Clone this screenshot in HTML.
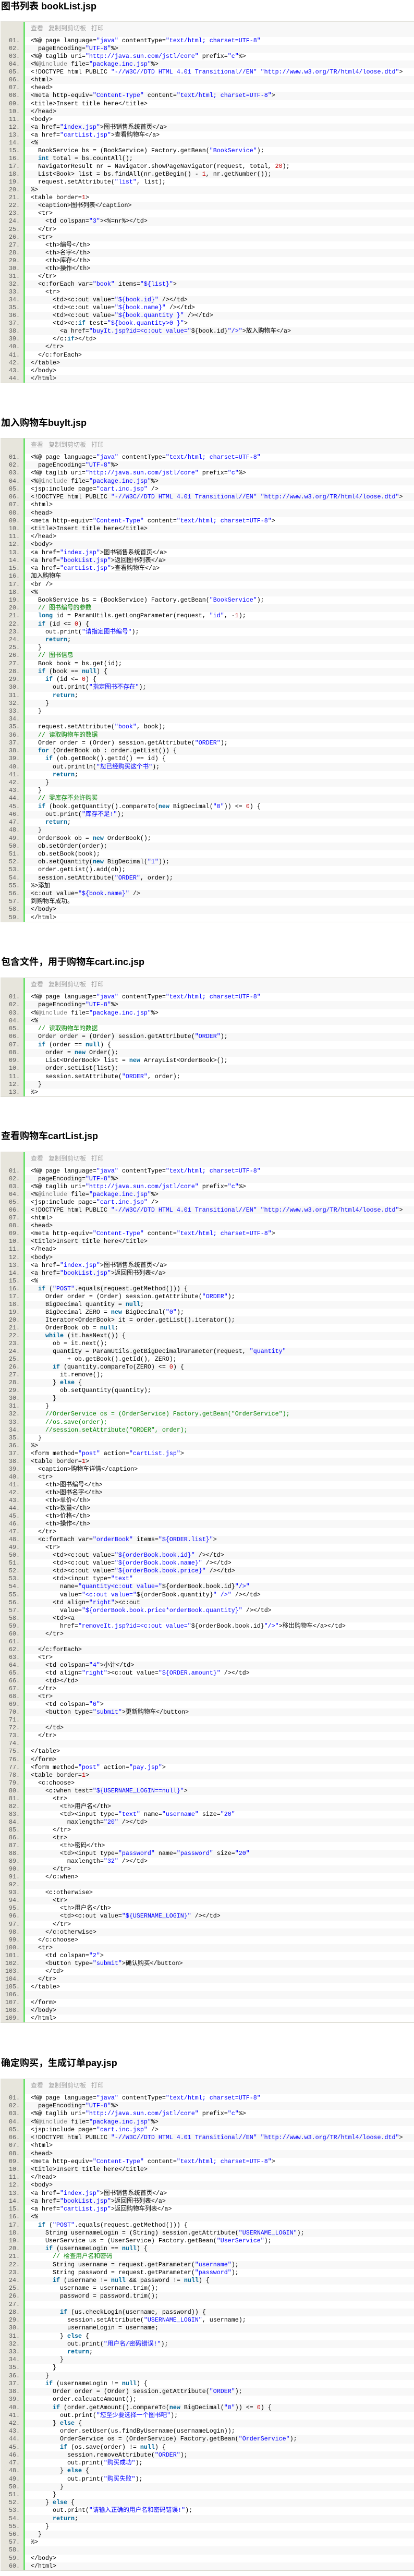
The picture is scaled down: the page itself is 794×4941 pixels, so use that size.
<!DOCTYPE html>
<html><head><meta charset="utf-8"><title>jsp</title>
<style>
body{margin:0;width:794px;height:4941px;position:relative;background:#fff;font-family:"Liberation Sans","Noto Sans CJK SC",sans-serif;overflow:hidden}
h2{position:absolute;left:2px;margin:0;font-size:18px;line-height:24px;font-weight:bold;color:#000;white-space:nowrap}
.b{position:absolute;left:1px;width:793px;background:#e7e5dc;border-top:1px solid #dcdbd2;border-bottom:1px solid #dcdbd2;font-family:"Liberation Mono","Noto Sans CJK SC",monospace;font-size:11.66px;counter-reset:n}
.b::before{content:"";position:absolute;left:44px;top:0;bottom:0;width:3px;background:#6ce26c}
.t{height:29px;margin-left:47px;background:#f8f8f8;color:#a0a0a0;padding-left:11px;font:12px/24px "Liberation Sans","Noto Sans CJK SC",sans-serif;white-space:nowrap}
.t span{margin-right:10px}
.l{height:var(--h);line-height:var(--h);white-space:pre;padding-left:58px;position:relative;background:linear-gradient(90deg,transparent 47px,#fff 47px);counter-increment:n;color:#000;overflow:hidden}
.l:nth-child(odd){background:linear-gradient(90deg,transparent 47px,#f8f8f8 47px)}
.l::before{content:counter(n,decimal-leading-zero)".";position:absolute;left:0;width:37px;text-align:right;color:#5c5c5c}
s{text-decoration:none;color:#0000ff}
k{font-weight:bold;color:#006699}
c{color:#008200}
n{color:#c00000}
g{color:#808080}
</style></head><body>

<h2 style="top:0">图书列表 bookList.jsp</h2>
<div class="b" style="top:41px;--h:15.07px">
<div class="t"><span>查看</span><span>复制到剪切板</span><span>打印</span></div>
<div class="l">&lt;%@ page language=<s>"java"</s> contentType=<s>"text/html; charset=UTF-8"</s></div>
<div class="l">  pageEncoding=<s>"UTF-8"</s>%&gt;</div>
<div class="l">&lt;%@ taglib uri=<s>"http://java.sun.com/jstl/core"</s> prefix=<s>"c"</s>%&gt;</div>
<div class="l">&lt;%<g>@include</g> file=<s>"package.inc.jsp"</s>%&gt;</div>
<div class="l">&lt;!DOCTYPE html PUBLIC <s>"-//W3C//DTD HTML 4.01 Transitional//EN"</s> <s>"http://www.w3.org/TR/html4/loose.dtd"</s>&gt;</div>
<div class="l">&lt;html&gt;</div>
<div class="l">&lt;head&gt;</div>
<div class="l">&lt;meta http-equiv=<s>"Content-Type"</s> content=<s>"text/html; charset=UTF-8"</s>&gt;</div>
<div class="l">&lt;title&gt;Insert title here&lt;/title&gt;</div>
<div class="l">&lt;/head&gt;</div>
<div class="l">&lt;body&gt;</div>
<div class="l">&lt;a href=<s>"index.jsp"</s>&gt;图书销售系统首页&lt;/a&gt;</div>
<div class="l">&lt;a href=<s>"cartList.jsp"</s>&gt;查看购物车&lt;/a&gt;</div>
<div class="l">&lt;%</div>
<div class="l">  BookService bs = (BookService) Factory.getBean(<s>"BookService"</s>);</div>
<div class="l">  <k>int</k> total = bs.countAll();</div>
<div class="l">  NavigatorResult nr = Navigator.showPageNavigator(request, total, <n>20</n>);</div>
<div class="l">  List&lt;Book&gt; list = bs.findAll(nr.getBegin() - <n>1</n>, nr.getNumber());</div>
<div class="l">  request.setAttribute(<s>"list"</s>, list);</div>
<div class="l">%&gt;</div>
<div class="l">&lt;table border=<n>1</n>&gt;</div>
<div class="l">  &lt;caption&gt;图书列表&lt;/caption&gt;</div>
<div class="l">  &lt;tr&gt;</div>
<div class="l">    &lt;td colspan=<s>"3"</s>&gt;&lt;%=nr%&gt;&lt;/td&gt;</div>
<div class="l">  &lt;/tr&gt;</div>
<div class="l">  &lt;tr&gt;</div>
<div class="l">    &lt;th&gt;编号&lt;/th&gt;</div>
<div class="l">    &lt;th&gt;名字&lt;/th&gt;</div>
<div class="l">    &lt;th&gt;库存&lt;/th&gt;</div>
<div class="l">    &lt;th&gt;操作&lt;/th&gt;</div>
<div class="l">  &lt;/tr&gt;</div>
<div class="l">  &lt;c:forEach var=<s>"book"</s> items=<s>"${list}"</s>&gt;</div>
<div class="l">    &lt;tr&gt;</div>
<div class="l">      &lt;td&gt;&lt;c:out value=<s>"${book.id}"</s> /&gt;&lt;/td&gt;</div>
<div class="l">      &lt;td&gt;&lt;c:out value=<s>"${book.name}"</s> /&gt;&lt;/td&gt;</div>
<div class="l">      &lt;td&gt;&lt;c:out value=<s>"${book.quantity }"</s> /&gt;&lt;/td&gt;</div>
<div class="l">      &lt;td&gt;&lt;c:<k>if</k> test=<s>"${book.quantity&gt;0 }"</s>&gt;</div>
<div class="l">        &lt;a href=<s>"buyIt.jsp?id=&lt;c:out value="</s>${book.id}<s>"/&gt;"</s>&gt;放入购物车&lt;/a&gt;</div>
<div class="l">      &lt;/c:<k>if</k>&gt;&lt;/td&gt;</div>
<div class="l">    &lt;/tr&gt;</div>
<div class="l">  &lt;/c:forEach&gt;</div>
<div class="l">&lt;/table&gt;</div>
<div class="l">&lt;/body&gt;</div>
<div class="l">&lt;/html&gt;</div>
</div>

<h2 style="top:799px">加入购物车buyIt.jsp</h2>
<div class="b" style="top:840px;--h:15.22px">
<div class="t"><span>查看</span><span>复制到剪切板</span><span>打印</span></div>
<div class="l">&lt;%@ page language=<s>"java"</s> contentType=<s>"text/html; charset=UTF-8"</s></div>
<div class="l">  pageEncoding=<s>"UTF-8"</s>%&gt;</div>
<div class="l">&lt;%@ taglib uri=<s>"http://java.sun.com/jstl/core"</s> prefix=<s>"c"</s>%&gt;</div>
<div class="l">&lt;%<g>@include</g> file=<s>"package.inc.jsp"</s>%&gt;</div>
<div class="l">&lt;jsp:include page=<s>"cart.inc.jsp"</s> /&gt;</div>
<div class="l">&lt;!DOCTYPE html PUBLIC <s>"-//W3C//DTD HTML 4.01 Transitional//EN"</s> <s>"http://www.w3.org/TR/html4/loose.dtd"</s>&gt;</div>
<div class="l">&lt;html&gt;</div>
<div class="l">&lt;head&gt;</div>
<div class="l">&lt;meta http-equiv=<s>"Content-Type"</s> content=<s>"text/html; charset=UTF-8"</s>&gt;</div>
<div class="l">&lt;title&gt;Insert title here&lt;/title&gt;</div>
<div class="l">&lt;/head&gt;</div>
<div class="l">&lt;body&gt;</div>
<div class="l">&lt;a href=<s>"index.jsp"</s>&gt;图书销售系统首页&lt;/a&gt;</div>
<div class="l">&lt;a href=<s>"bookList.jsp"</s>&gt;返回图书列表&lt;/a&gt;</div>
<div class="l">&lt;a href=<s>"cartList.jsp"</s>&gt;查看购物车&lt;/a&gt;</div>
<div class="l">加入购物车</div>
<div class="l">&lt;br /&gt;</div>
<div class="l">&lt;%</div>
<div class="l">  BookService bs = (BookService) Factory.getBean(<s>"BookService"</s>);</div>
<div class="l">  <c>// 图书编号的参数</c></div>
<div class="l">  <k>long</k> id = ParamUtils.getLongParameter(request, <s>"id"</s>, -<n>1</n>);</div>
<div class="l">  <k>if</k> (id &lt;= <n>0</n>) {</div>
<div class="l">    out.print(<s>"请指定图书编号"</s>);</div>
<div class="l">    <k>return</k>;</div>
<div class="l">  }</div>
<div class="l">  <c>// 图书信息</c></div>
<div class="l">  Book book = bs.get(id);</div>
<div class="l">  <k>if</k> (book == <k>null</k>) {</div>
<div class="l">    <k>if</k> (id &lt;= <n>0</n>) {</div>
<div class="l">      out.print(<s>"指定图书不存在"</s>);</div>
<div class="l">      <k>return</k>;</div>
<div class="l">    }</div>
<div class="l">  }</div>
<div class="l"> </div>
<div class="l">  request.setAttribute(<s>"book"</s>, book);</div>
<div class="l">  <c>// 读取购物车的数据</c></div>
<div class="l">  Order order = (Order) session.getAttribute(<s>"ORDER"</s>);</div>
<div class="l">  <k>for</k> (OrderBook ob : order.getList()) {</div>
<div class="l">    <k>if</k> (ob.getBook().getId() == id) {</div>
<div class="l">      out.println(<s>"您已经购买这个书"</s>);</div>
<div class="l">      <k>return</k>;</div>
<div class="l">    }</div>
<div class="l">  }</div>
<div class="l">  <c>// 零库存不允许购买</c></div>
<div class="l">  <k>if</k> (book.getQuantity().compareTo(<k>new</k> BigDecimal(<s>"0"</s>)) &lt;= <n>0</n>) {</div>
<div class="l">    out.print(<s>"库存不足!"</s>);</div>
<div class="l">    <k>return</k>;</div>
<div class="l">  }</div>
<div class="l">  OrderBook ob = <k>new</k> OrderBook();</div>
<div class="l">  ob.setOrder(order);</div>
<div class="l">  ob.setBook(book);</div>
<div class="l">  ob.setQuantity(<k>new</k> BigDecimal(<s>"1"</s>));</div>
<div class="l">  order.getList().add(ob);</div>
<div class="l">  session.setAttribute(<s>"ORDER"</s>, order);</div>
<div class="l">%&gt;添加</div>
<div class="l">&lt;c:out value=<s>"${book.name}"</s> /&gt;</div>
<div class="l">到购物车成功。</div>
<div class="l">&lt;/body&gt;</div>
<div class="l">&lt;/html&gt;</div>
</div>

<h2 style="top:1833px">包含文件，用于购物车cart.inc.jsp</h2>
<div class="b" style="top:1875px;--h:15.25px">
<div class="t"><span>查看</span><span>复制到剪切板</span><span>打印</span></div>
<div class="l">&lt;%@ page language=<s>"java"</s> contentType=<s>"text/html; charset=UTF-8"</s></div>
<div class="l">  pageEncoding=<s>"UTF-8"</s>%&gt;</div>
<div class="l">&lt;%<g>@include</g> file=<s>"package.inc.jsp"</s>%&gt;</div>
<div class="l">&lt;%</div>
<div class="l">  <c>// 读取购物车的数据</c></div>
<div class="l">  Order order = (Order) session.getAttribute(<s>"ORDER"</s>);</div>
<div class="l">  <k>if</k> (order == <k>null</k>) {</div>
<div class="l">    order = <k>new</k> Order();</div>
<div class="l">    List&lt;OrderBook&gt; list = <k>new</k> ArrayList&lt;OrderBook&gt;();</div>
<div class="l">    order.setList(list);</div>
<div class="l">    session.setAttribute(<s>"ORDER"</s>, order);</div>
<div class="l">  }</div>
<div class="l">%&gt;</div>
</div>

<h2 style="top:2167px">查看购物车cartList.jsp</h2>
<div class="b" style="top:2209px;--h:15.06px">
<div class="t"><span>查看</span><span>复制到剪切板</span><span>打印</span></div>
<div class="l">&lt;%@ page language=<s>"java"</s> contentType=<s>"text/html; charset=UTF-8"</s></div>
<div class="l">  pageEncoding=<s>"UTF-8"</s>%&gt;</div>
<div class="l">&lt;%@ taglib uri=<s>"http://java.sun.com/jstl/core"</s> prefix=<s>"c"</s>%&gt;</div>
<div class="l">&lt;%<g>@include</g> file=<s>"package.inc.jsp"</s>%&gt;</div>
<div class="l">&lt;jsp:include page=<s>"cart.inc.jsp"</s> /&gt;</div>
<div class="l">&lt;!DOCTYPE html PUBLIC <s>"-//W3C//DTD HTML 4.01 Transitional//EN"</s> <s>"http://www.w3.org/TR/html4/loose.dtd"</s>&gt;</div>
<div class="l">&lt;html&gt;</div>
<div class="l">&lt;head&gt;</div>
<div class="l">&lt;meta http-equiv=<s>"Content-Type"</s> content=<s>"text/html; charset=UTF-8"</s>&gt;</div>
<div class="l">&lt;title&gt;Insert title here&lt;/title&gt;</div>
<div class="l">&lt;/head&gt;</div>
<div class="l">&lt;body&gt;</div>
<div class="l">&lt;a href=<s>"index.jsp"</s>&gt;图书销售系统首页&lt;/a&gt;</div>
<div class="l">&lt;a href=<s>"bookList.jsp"</s>&gt;返回图书列表&lt;/a&gt;</div>
<div class="l">&lt;%</div>
<div class="l">  <k>if</k> (<s>"POST"</s>.equals(request.getMethod())) {</div>
<div class="l">    Order order = (Order) session.getAttribute(<s>"ORDER"</s>);</div>
<div class="l">    BigDecimal quantity = <k>null</k>;</div>
<div class="l">    BigDecimal ZERO = <k>new</k> BigDecimal(<s>"0"</s>);</div>
<div class="l">    Iterator&lt;OrderBook&gt; it = order.getList().iterator();</div>
<div class="l">    OrderBook ob = <k>null</k>;</div>
<div class="l">    <k>while</k> (it.hasNext()) {</div>
<div class="l">      ob = it.next();</div>
<div class="l">      quantity = ParamUtils.getBigDecimalParameter(request, <s>"quantity"</s></div>
<div class="l">          + ob.getBook().getId(), ZERO);</div>
<div class="l">      <k>if</k> (quantity.compareTo(ZERO) &lt;= <n>0</n>) {</div>
<div class="l">        it.remove();</div>
<div class="l">      } <k>else</k> {</div>
<div class="l">        ob.setQuantity(quantity);</div>
<div class="l">      }</div>
<div class="l">    }</div>
<div class="l">    <c>//OrderService os = (OrderService) Factory.getBean("OrderService");</c></div>
<div class="l">    <c>//os.save(order);</c></div>
<div class="l">    <c>//session.setAttribute("ORDER", order);</c></div>
<div class="l">  }</div>
<div class="l">%&gt;</div>
<div class="l">&lt;form method=<s>"post"</s> action=<s>"cartList.jsp"</s>&gt;</div>
<div class="l">&lt;table border=<n>1</n>&gt;</div>
<div class="l">  &lt;caption&gt;购物车详情&lt;/caption&gt;</div>
<div class="l">  &lt;tr&gt;</div>
<div class="l">    &lt;th&gt;图书编号&lt;/th&gt;</div>
<div class="l">    &lt;th&gt;图书名字&lt;/th&gt;</div>
<div class="l">    &lt;th&gt;单价&lt;/th&gt;</div>
<div class="l">    &lt;th&gt;数量&lt;/th&gt;</div>
<div class="l">    &lt;th&gt;价格&lt;/th&gt;</div>
<div class="l">    &lt;th&gt;操作&lt;/th&gt;</div>
<div class="l">  &lt;/tr&gt;</div>
<div class="l">  &lt;c:forEach var=<s>"orderBook"</s> items=<s>"${ORDER.list}"</s>&gt;</div>
<div class="l">    &lt;tr&gt;</div>
<div class="l">      &lt;td&gt;&lt;c:out value=<s>"${orderBook.book.id}"</s> /&gt;&lt;/td&gt;</div>
<div class="l">      &lt;td&gt;&lt;c:out value=<s>"${orderBook.book.name}"</s> /&gt;&lt;/td&gt;</div>
<div class="l">      &lt;td&gt;&lt;c:out value=<s>"${orderBook.book.price}"</s> /&gt;&lt;/td&gt;</div>
<div class="l">      &lt;td&gt;&lt;input type=<s>"text"</s></div>
<div class="l">        name=<s>"quantity&lt;c:out value="</s>${orderBook.book.id}<s>"/&gt;"</s></div>
<div class="l">        value=<s>"&lt;c:out value="</s>${orderBook.quantity}<s>" /&gt;"</s> /&gt;&lt;/td&gt;</div>
<div class="l">      &lt;td align=<s>"right"</s>&gt;&lt;c:out</div>
<div class="l">        value=<s>"${orderBook.book.price*orderBook.quantity}"</s> /&gt;&lt;/td&gt;</div>
<div class="l">      &lt;td&gt;&lt;a</div>
<div class="l">        href=<s>"removeIt.jsp?id=&lt;c:out value="</s>${orderBook.book.id}<s>"/&gt;"</s>&gt;移出购物车&lt;/a&gt;&lt;/td&gt;</div>
<div class="l">    &lt;/tr&gt;</div>
<div class="l"> </div>
<div class="l">  &lt;/c:forEach&gt;</div>
<div class="l">  &lt;tr&gt;</div>
<div class="l">    &lt;td colspan=<s>"4"</s>&gt;小计&lt;/td&gt;</div>
<div class="l">    &lt;td align=<s>"right"</s>&gt;&lt;c:out value=<s>"${ORDER.amount}"</s> /&gt;&lt;/td&gt;</div>
<div class="l">    &lt;td&gt;&lt;/td&gt;</div>
<div class="l">  &lt;/tr&gt;</div>
<div class="l">  &lt;tr&gt;</div>
<div class="l">    &lt;td colspan=<s>"6"</s>&gt;</div>
<div class="l">    &lt;button type=<s>"submit"</s>&gt;更新购物车&lt;/button&gt;</div>
<div class="l"> </div>
<div class="l">    &lt;/td&gt;</div>
<div class="l">  &lt;/tr&gt;</div>
<div class="l"> </div>
<div class="l">&lt;/table&gt;</div>
<div class="l">&lt;/form&gt;</div>
<div class="l">&lt;form method=<s>"post"</s> action=<s>"pay.jsp"</s>&gt;</div>
<div class="l">&lt;table border=<n>1</n>&gt;</div>
<div class="l">  &lt;c:choose&gt;</div>
<div class="l">    &lt;c:when test=<s>"${USERNAME_LOGIN==null}"</s>&gt;</div>
<div class="l">      &lt;tr&gt;</div>
<div class="l">        &lt;th&gt;用户名&lt;/th&gt;</div>
<div class="l">        &lt;td&gt;&lt;input type=<s>"text"</s> name=<s>"username"</s> size=<s>"20"</s></div>
<div class="l">          maxlength=<s>"20"</s> /&gt;&lt;/td&gt;</div>
<div class="l">      &lt;/tr&gt;</div>
<div class="l">      &lt;tr&gt;</div>
<div class="l">        &lt;th&gt;密码&lt;/th&gt;</div>
<div class="l">        &lt;td&gt;&lt;input type=<s>"password"</s> name=<s>"password"</s> size=<s>"20"</s></div>
<div class="l">          maxlength=<s>"32"</s> /&gt;&lt;/td&gt;</div>
<div class="l">      &lt;/tr&gt;</div>
<div class="l">    &lt;/c:when&gt;</div>
<div class="l"> </div>
<div class="l">    &lt;c:otherwise&gt;</div>
<div class="l">      &lt;tr&gt;</div>
<div class="l">        &lt;th&gt;用户名&lt;/th&gt;</div>
<div class="l">        &lt;td&gt;&lt;c:out value=<s>"${USERNAME_LOGIN}"</s> /&gt;&lt;/td&gt;</div>
<div class="l">      &lt;/tr&gt;</div>
<div class="l">    &lt;/c:otherwise&gt;</div>
<div class="l">  &lt;/c:choose&gt;</div>
<div class="l">  &lt;tr&gt;</div>
<div class="l">    &lt;td colspan=<s>"2"</s>&gt;</div>
<div class="l">    &lt;button type=<s>"submit"</s>&gt;确认购买&lt;/button&gt;</div>
<div class="l">    &lt;/td&gt;</div>
<div class="l">  &lt;/tr&gt;</div>
<div class="l">&lt;/table&gt;</div>
<div class="l"> </div>
<div class="l">&lt;/form&gt;</div>
<div class="l">&lt;/body&gt;</div>
<div class="l">&lt;/html&gt;</div>
</div>

<h2 style="top:3945px">确定购买，生成订单pay.jsp</h2>
<div class="b" style="top:3987px;--h:15.22px">
<div class="t"><span>查看</span><span>复制到剪切板</span><span>打印</span></div>
<div class="l">&lt;%@ page language=<s>"java"</s> contentType=<s>"text/html; charset=UTF-8"</s></div>
<div class="l">  pageEncoding=<s>"UTF-8"</s>%&gt;</div>
<div class="l">&lt;%@ taglib uri=<s>"http://java.sun.com/jstl/core"</s> prefix=<s>"c"</s>%&gt;</div>
<div class="l">&lt;%<g>@include</g> file=<s>"package.inc.jsp"</s>%&gt;</div>
<div class="l">&lt;jsp:include page=<s>"cart.inc.jsp"</s> /&gt;</div>
<div class="l">&lt;!DOCTYPE html PUBLIC <s>"-//W3C//DTD HTML 4.01 Transitional//EN"</s> <s>"http://www.w3.org/TR/html4/loose.dtd"</s>&gt;</div>
<div class="l">&lt;html&gt;</div>
<div class="l">&lt;head&gt;</div>
<div class="l">&lt;meta http-equiv=<s>"Content-Type"</s> content=<s>"text/html; charset=UTF-8"</s>&gt;</div>
<div class="l">&lt;title&gt;Insert title here&lt;/title&gt;</div>
<div class="l">&lt;/head&gt;</div>
<div class="l">&lt;body&gt;</div>
<div class="l">&lt;a href=<s>"index.jsp"</s>&gt;图书销售系统首页&lt;/a&gt;</div>
<div class="l">&lt;a href=<s>"bookList.jsp"</s>&gt;返回图书列表&lt;/a&gt;</div>
<div class="l">&lt;a href=<s>"cartList.jsp"</s>&gt;返回购物车列表&lt;/a&gt;</div>
<div class="l">&lt;%</div>
<div class="l">  <k>if</k> (<s>"POST"</s>.equals(request.getMethod())) {</div>
<div class="l">    String usernameLogin = (String) session.getAttribute(<s>"USERNAME_LOGIN"</s>);</div>
<div class="l">    UserService us = (UserService) Factory.getBean(<s>"UserService"</s>);</div>
<div class="l">    <k>if</k> (usernameLogin == <k>null</k>) {</div>
<div class="l">      <c>// 检查用户名和密码</c></div>
<div class="l">      String username = request.getParameter(<s>"username"</s>);</div>
<div class="l">      String password = request.getParameter(<s>"password"</s>);</div>
<div class="l">      <k>if</k> (username != <k>null</k> &amp;&amp; password != <k>null</k>) {</div>
<div class="l">        username = username.trim();</div>
<div class="l">        password = password.trim();</div>
<div class="l"> </div>
<div class="l">        <k>if</k> (us.checkLogin(username, password)) {</div>
<div class="l">          session.setAttribute(<s>"USERNAME_LOGIN"</s>, username);</div>
<div class="l">          usernameLogin = username;</div>
<div class="l">        } <k>else</k> {</div>
<div class="l">          out.print(<s>"用户名/密码错误!"</s>);</div>
<div class="l">          <k>return</k>;</div>
<div class="l">        }</div>
<div class="l">      }</div>
<div class="l">    }</div>
<div class="l">    <k>if</k> (usernameLogin != <k>null</k>) {</div>
<div class="l">      Order order = (Order) session.getAttribute(<s>"ORDER"</s>);</div>
<div class="l">      order.calcuateAmount();</div>
<div class="l">      <k>if</k> (order.getAmount().compareTo(<k>new</k> BigDecimal(<s>"0"</s>)) &lt;= <n>0</n>) {</div>
<div class="l">        out.print(<s>"您至少要选择一个图书吧"</s>);</div>
<div class="l">      } <k>else</k> {</div>
<div class="l">        order.setUser(us.findByUsername(usernameLogin));</div>
<div class="l">        OrderService os = (OrderService) Factory.getBean(<s>"OrderService"</s>);</div>
<div class="l">        <k>if</k> (os.save(order) != <k>null</k>) {</div>
<div class="l">          session.removeAttribute(<s>"ORDER"</s>);</div>
<div class="l">          out.print(<s>"购买成功"</s>);</div>
<div class="l">        } <k>else</k> {</div>
<div class="l">          out.print(<s>"购买失败"</s>);</div>
<div class="l">        }</div>
<div class="l">      }</div>
<div class="l">    } <k>else</k> {</div>
<div class="l">      out.print(<s>"请输入正确的用户名和密码错误!"</s>);</div>
<div class="l">      <k>return</k>;</div>
<div class="l">    }</div>
<div class="l">  }</div>
<div class="l">%&gt;</div>
<div class="l"> </div>
<div class="l">&lt;/body&gt;</div>
<div class="l">&lt;/html&gt;</div>
</div>

</body></html>
